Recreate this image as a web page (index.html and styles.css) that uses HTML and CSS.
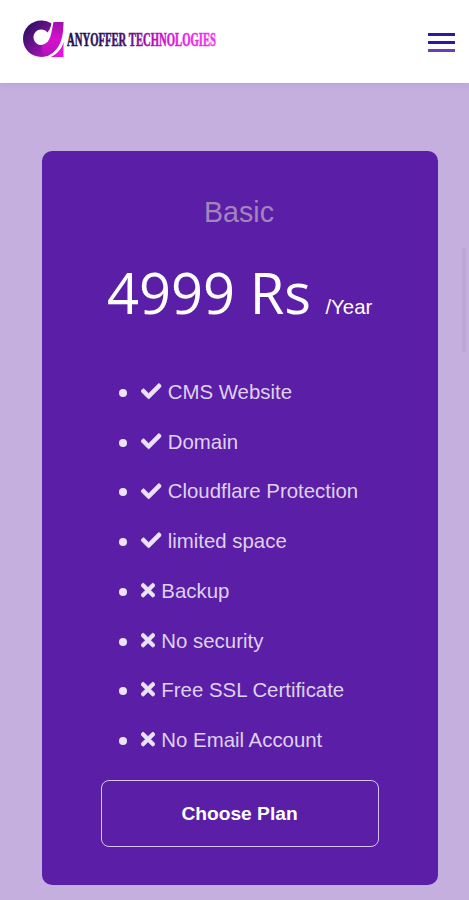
FILE: index.html
```html
<!DOCTYPE html>
<html lang="en">
    <head>
        <meta charset="UTF-8" />
        <meta name="viewport" content="width=device-width, initial-scale=1.0" />
        <title>Anyoffer Technologies</title>
        <link rel="stylesheet" href="styles.css">
    </head>
    <body>
        <svg class="defs" width="0" height="0">
            <symbol id="check" viewBox="0 0 512 512">
                <path d="M173.898 439.404l-166.4-166.4c-9.997-9.997-9.997-26.206 0-36.204l36.203-36.204c9.997-9.998 26.207-9.998 36.204 0L192 312.69 432.095 72.596c9.997-9.997 26.207-9.997 36.204 0l36.203 36.204c9.997 9.997 9.997 26.206 0 36.204l-294.4 294.401c-9.998 9.997-26.207 9.997-36.204-.001z" />
            </symbol>
            <symbol id="times" viewBox="0 0 352 512">
                <path d="M242.72 256l100.07-100.07c12.28-12.28 12.28-32.19 0-44.48l-22.24-22.24c-12.28-12.28-32.19-12.28-44.48 0L176 189.28 75.93 89.21c-12.28-12.28-32.19-12.28-44.48 0L9.21 111.45c-12.28 12.28-12.28 32.19 0 44.48L109.28 256 9.21 356.07c-12.28 12.28-12.28 32.19 0 44.48l22.24 22.24c12.28 12.28 32.2 12.28 44.48 0L176 322.72l100.07 100.07c12.28 12.28 32.2 12.28 44.48 0l22.24-22.24c12.28-12.28 12.28-32.19 0-44.48L242.72 256z" />
            </symbol>
        </svg>

        <header class="navbar">
            <svg class="logo" width="210" height="42" viewBox="0 0 210 42">
                <defs>
                    <linearGradient id="ring" x1="0" y1="0" x2="1" y2="1">
                        <stop offset="0.1" stop-color="#2b0f5c" />
                        <stop offset="0.5" stop-color="#6d1290" />
                        <stop offset="1" stop-color="#d810d0" />
                    </linearGradient>
                    <linearGradient id="stem" x1="0" y1="0" x2="0" y2="1">
                        <stop offset="0" stop-color="#9a14a8" />
                        <stop offset="0.5" stop-color="#d80fd0" />
                        <stop offset="1" stop-color="#b412b8" />
                    </linearGradient>
                    <linearGradient id="name" x1="0" y1="0" x2="1" y2="0">
                        <stop offset="0" stop-color="#1d0f50" />
                        <stop offset="0.38" stop-color="#4c1070" />
                        <stop offset="0.6" stop-color="#c010c0" />
                        <stop offset="0.8" stop-color="#f01ae6" />
                        <stop offset="1" stop-color="#ee3ae8" />
                    </linearGradient>
                </defs>
                <path fill="url(#ring)" d="M29.500 5.500C26.500 3.500 23 2.500 19.500 2.500C9 2.500 1 10.500 1 20.800C1 31 9 39 19.500 39C25 39 30 36 33 31L25 24.500C23.500 26 21.500 27 19.300 27C15 27 11.500 23.500 11.500 19.200C11.500 15 15 11.500 19.300 11.500C21.800 11.500 24 12.700 25.500 14.500C27.500 12 28.800 9 29.500 5.500Z" />
                <path fill="url(#stem)" d="M31.500 4H41.500C41.500 20 38 33 25 38C21 37 19 33 20 27C24 26.500 27 23 28.500 18C30 13 30.500 9 31.500 4Z" />
                <path fill="#e812de" d="M41.500 24V39H28C35 36 39.500 31 41.500 24Z" />
                <path fill="none" stroke="#fff" stroke-width="1.300" d="M42 19C40.500 29 35.500 36 26 39.500" />
                <text class="logo-name" x="45" y="28" textLength="149" lengthAdjust="spacingAndGlyphs" fill="url(#name)" stroke="url(#name)">ANYOFFER TECHNOLOGIES</text>
            </svg>
            <div class="menu">
                <span></span>
                <span></span>
                <span class="last"></span>
            </div>
        </header>

        <main class="pricing">
            <div class="card">
                <h3>Basic</h3>
                <h2>4999 Rs <small>/Year</small></h2>
                <ul>
                    <li><svg class="check"><use href="#check" /></svg> CMS Website</li>
                    <li><svg class="check"><use href="#check" /></svg> Domain</li>
                    <li><svg class="check"><use href="#check" /></svg> Cloudflare Protection</li>
                    <li><svg class="check"><use href="#check" /></svg> limited space</li>
                    <li><svg class="times"><use href="#times" /></svg> Backup</li>
                    <li><svg class="times"><use href="#times" /></svg> No security</li>
                    <li><svg class="times"><use href="#times" /></svg> Free SSL Certificate</li>
                    <li><svg class="times"><use href="#times" /></svg> No Email Account</li>
                </ul>
                <a class="btn">Choose Plan</a>
            </div>
            <div class="scrollbar"></div>
        </main>
    </body>
</html>
```
FILE: styles.css
```css
* {
    box-sizing: border-box;
}

body {
    margin: 0;
    height: 900px;
    overflow: hidden;
    background: #c4afde;
    font-family: "Liberation Sans", Arial, sans-serif;
}

.defs {
    position: absolute;
}

.navbar {
    display: flex;
    justify-content: space-between;
    align-items: flex-start;
    height: 83px;
    padding: 18px 14px 0 22px;
    background: #fff;
    box-shadow: 0 0 8px rgba(90, 40, 130, 0.12);
}

.logo {
    overflow: visible;
}

.logo-name {
    font-family: "Liberation Serif", "Times New Roman", serif;
    font-size: 19px;
    font-weight: bold;
    stroke-width: 0.6px;
}

.menu {
    display: flex;
    flex-direction: column;
    gap: 5px;
    margin-top: 15px;
}

.menu span {
    width: 27px;
    height: 3px;
    background: #3016a0;
}

.menu .last {
    background: #6a3fae;
}

.pricing {
    position: relative;
    padding: 68px 31px 0 42px;
}

.card {
    height: 734px;
    padding: 43px 59px 0;
    border-radius: 10px;
    background: #5b1ea6;
    color: #fff;
}

h3 {
    margin: 0 2px 0 0;
    font-size: 28.6px;
    font-weight: normal;
    line-height: 36px;
    text-align: center;
    color: #a285bd;
}

h2 {
    margin: 24px 0 0 6px;
    font-family: "Open Sans", sans-serif;
    font-size: 56px;
    font-weight: normal;
    line-height: 76px;
    white-space: nowrap;
}

h2 small {
    font-family: "Liberation Sans", Arial, sans-serif;
    font-size: 20.4px;
}

ul {
    margin: 23px 0 0;
    padding: 0 0 0 40px;
    list-style: none;
    color: #ded2f0;
}

li {
    position: relative;
    font-size: 20.4px;
    line-height: 49.7px;
    white-space: nowrap;
}

li::before {
    content: "";
    position: absolute;
    left: -22px;
    top: 21px;
    width: 8px;
    height: 8px;
    border-radius: 50%;
    background: #ebe4f6;
}

li svg {
    height: 20.4px;
    margin-right: 0.7px;
    overflow: visible;
    fill: #ebe4f6;
    stroke: #ebe4f6;
    stroke-width: 16px;
    vertical-align: -2.5px;
}

.check {
    width: 20.4px;
}

.times {
    width: 14px;
}

.btn {
    display: block;
    width: 278px;
    height: 67px;
    margin-top: 14px;
    padding-right: 1px;
    border: 1.5px solid #d6c4f0;
    border-radius: 8px;
    font-size: 19.2px;
    font-weight: bold;
    line-height: 65px;
    text-align: center;
}

.scrollbar {
    position: absolute;
    top: 165px;
    right: 3px;
    width: 4px;
    height: 104px;
    background: #bda7d8;
}
```
